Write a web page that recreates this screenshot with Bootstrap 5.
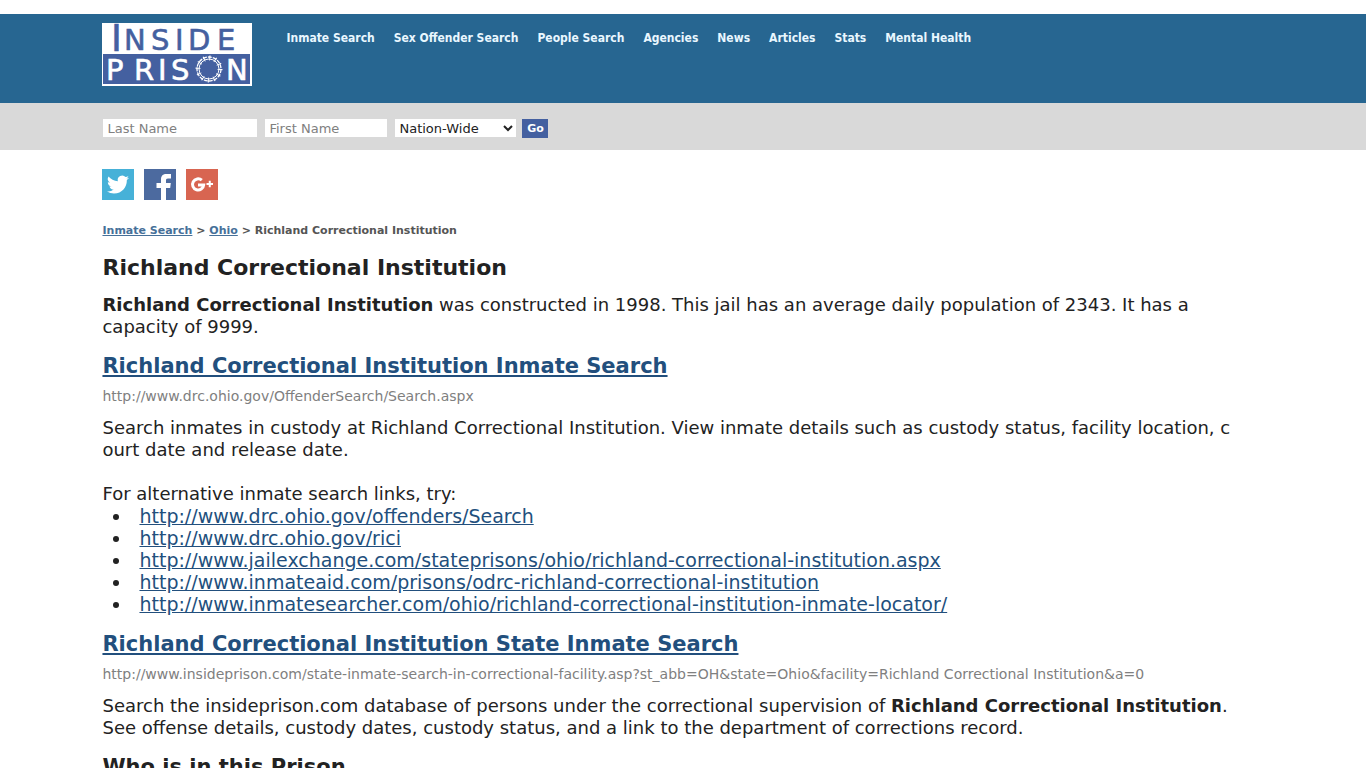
<!DOCTYPE html>
<html lang="en">
<head>
<meta charset="utf-8">
<meta name="viewport" content="width=device-width, initial-scale=1">
<title>Richland Correctional Institution - Inside Prison</title>
<link href="https://cdn.jsdelivr.net/npm/bootstrap@5.3.0/dist/css/bootstrap.min.css" rel="stylesheet">
<style>
body{font-family:Verdana,"DejaVu Sans",sans-serif;font-size:18px;line-height:22px;color:#222;background:#fff}
.page-width{width:85%;margin:0 auto}
.site-header{background:#276691;margin-top:14px;min-height:89px}
.site-logo{margin-top:9px}
.site-menu{font-family:Tahoma,"DejaVu Sans Condensed",sans-serif;font-size:12px;font-weight:700;line-height:16px;column-gap:19px;padding-top:16px;margin-left:34px}
.site-menu a{color:#e9f7ff;text-decoration:none}
.search-bar{background:#d9d9d9;min-height:47px;padding-top:16px}
.search-bar form{column-gap:8px;padding-left:1px}
.search-bar input,.search-bar select{font-family:Verdana,"DejaVu Sans",sans-serif;font-size:13px;line-height:16px;height:18px;border:0;border-radius:0;background-color:#fff;color:#222;padding:0 4px}
.search-bar input::placeholder{color:#808080;opacity:1}
.search-bar .last-name{width:154px}
.search-bar .first-name{width:122px}
.search-bar select{width:121px;padding:0}
.search-bar button{background:#4460a0;color:#fff;font-size:11px;font-weight:700;line-height:19px;width:26px;border:0;padding:0;margin-left:-2px}
.share-links{column-gap:10px;padding-top:19px}
.crumbs{font-size:11px;line-height:14px;font-weight:700;color:#555;margin-top:24px}
.crumbs a{color:#467099}
h1,h2{font-size:21px;line-height:26px;font-weight:700;margin:0}
h1{font-size:22px;margin:17px 0 13px}
h2{margin-top:15px}
main a{color:#224f7d}
.source-url{font-size:14px;line-height:18px;color:#808080;margin:8px 0 12px}
.entry-text{margin:0}
.alt-intro{margin-top:22px}
.alt-links{margin:0;padding:0 0 1px 30px;font-size:19px}
.alt-links li{padding-left:7px}
</style>
</head>
<body>
<header class="site-header">
  <div class="page-width d-flex align-items-start">
    <a href="#" class="site-logo flex-shrink-0 d-block" aria-label="Inside Prison">
      <svg class="d-block" width="150" height="63" viewBox="0 0 150 63">
        <rect width="150" height="63" fill="#fff"/>
        <rect x="1" y="31" width="147" height="30" fill="#4460a0"/>
        <g font-family="DejaVu Sans" font-size="29" stroke-width=".6">
          <g fill="#4460a0" stroke="#4460a0">
            <text x="9" y="28" font-size="37">I</text>
            <text y="27" x="22 49 73 86 115">NSIDE</text>
          </g>
          <g fill="#fff" stroke="#fff">
            <text y="57" x="4 32 56 69">PRIS</text>
            <text y="57" x="124">N</text>
          </g>
        </g>
        <g fill="none" stroke="#fff">
          <circle cx="107" cy="46" r="12" stroke-width="1.300" stroke-dasharray="4 1"/>
          <circle cx="107" cy="46" r="10" stroke-width="1"/>
          <circle cx="107" cy="46" r="11" stroke-width="5" stroke-dasharray="1 4.760"/>
        </g>
      </svg>
    </a>
    <nav class="site-menu d-flex flex-wrap">
      <a href="#">Inmate Search</a><a href="#">Sex Offender Search</a><a href="#">People Search</a><a href="#">Agencies</a><a href="#">News</a><a href="#">Articles</a><a href="#">Stats</a><a href="#">Mental Health</a>
    </nav>
  </div>
</header>
<div class="search-bar">
  <form class="page-width d-flex flex-wrap">
    <input class="last-name" type="text" placeholder="Last Name" aria-label="Last Name">
    <input class="first-name" type="text" placeholder="First Name" aria-label="First Name">
    <select aria-label="State"><option>Nation-Wide</option><option>Ohio</option></select>
    <button type="button">Go</button>
  </form>
</div>
<main class="page-width">
  <div class="share-links d-flex">
    <a href="#" aria-label="Twitter"><svg class="d-block" width="32" height="31" viewBox="0 0 32 31"><rect width="32" height="31" fill="#46b1d8"/><path transform="translate(5 4.500) scale(.92)" fill="#fff" d="M23.950 4.570a10 10 0 0 1-2.820.780 4.960 4.960 0 0 0 2.160-2.720c-.950.550-2 .950-3.130 1.180a4.920 4.920 0 0 0-8.380 4.480C7.690 8.090 4.070 6.130 1.640 3.160a4.920 4.920 0 0 0 1.520 6.570 4.900 4.900 0 0 1-2.230-.610v.060a4.920 4.920 0 0 0 3.950 4.830 5 5 0 0 1-2.210.080 4.940 4.940 0 0 0 4.600 3.420A9.870 9.870 0 0 1 0 19.540a13.990 13.990 0 0 0 7.550 2.210c9.050 0 14-7.500 14-13.980 0-.210 0-.420-.020-.630a9.940 9.940 0 0 0 2.420-2.570z"/></svg></a>
    <a href="#" aria-label="Facebook"><svg class="d-block" width="32" height="31" viewBox="0 0 32 31"><rect width="32" height="31" fill="#4c6a9f"/><path fill="#fff" d="M17 31V19h-4.500v-5H17v-3.500C17 6.800 19 5 22.500 5H27v4.500h-3c-1.700 0-2 .800-2 2V14h4.800l-.6 5H22v12z"/></svg></a>
    <a href="#" aria-label="Google Plus"><svg class="d-block" width="32" height="31" viewBox="0 0 32 31"><rect width="32" height="31" fill="#d86551"/><path fill="none" stroke="#fff" stroke-width="3" d="M15.800 11.200A5.600 5.600 0 1 0 17.700 15.900H12"/><path fill="none" stroke="#fff" stroke-width="2" d="M20.500 15H27M23.750 11.750v6.500"/></svg></a>
  </div>
  <div class="crumbs"><a href="#">Inmate Search</a> &gt; <a href="#">Ohio</a> &gt; Richland Correctional Institution</div>
  <h1>Richland Correctional Institution</h1>
  <p class="entry-text"><b>Richland Correctional Institution</b> was constructed in 1998. This jail has an average daily population of 2343. It has a capacity of 9999.</p>
  <h2><a href="#">Richland Correctional Institution Inmate Search</a></h2>
  <div class="source-url">http://www.drc.ohio.gov/OffenderSearch/Search.aspx</div>
  <p class="entry-text">Search inmates in custody at Richland Correctional Institution. View inmate details such as custody status, facility location, c<br>ourt date and release date.</p>
  <p class="alt-intro mb-0">For alternative inmate search links, try:</p>
  <ul class="alt-links">
    <li><a href="#">http://www.drc.ohio.gov/offenders/Search</a></li>
    <li><a href="#">http://www.drc.ohio.gov/rici</a></li>
    <li><a href="#">http://www.jailexchange.com/stateprisons/ohio/richland-correctional-institution.aspx</a></li>
    <li><a href="#">http://www.inmateaid.com/prisons/odrc-richland-correctional-institution</a></li>
    <li><a href="#">http://www.inmatesearcher.com/ohio/richland-correctional-institution-inmate-locator/</a></li>
  </ul>
  <h2><a href="#">Richland Correctional Institution State Inmate Search</a></h2>
  <div class="source-url">http://www.insideprison.com/state-inmate-search-in-correctional-facility.asp?st_abb=OH&amp;state=Ohio&amp;facility=Richland Correctional Institution&amp;a=0</div>
  <p class="entry-text">Search the insideprison.com database of persons under the correctional supervision of <b>Richland Correctional Institution</b>. See offense details, custody dates, custody status, and a link to the department of corrections record.</p>
  <h2>Who is in this Prison</h2>
</main>
<script src="https://cdn.jsdelivr.net/npm/bootstrap@5.3.0/dist/js/bootstrap.bundle.min.js"></script>
</body>
</html>
